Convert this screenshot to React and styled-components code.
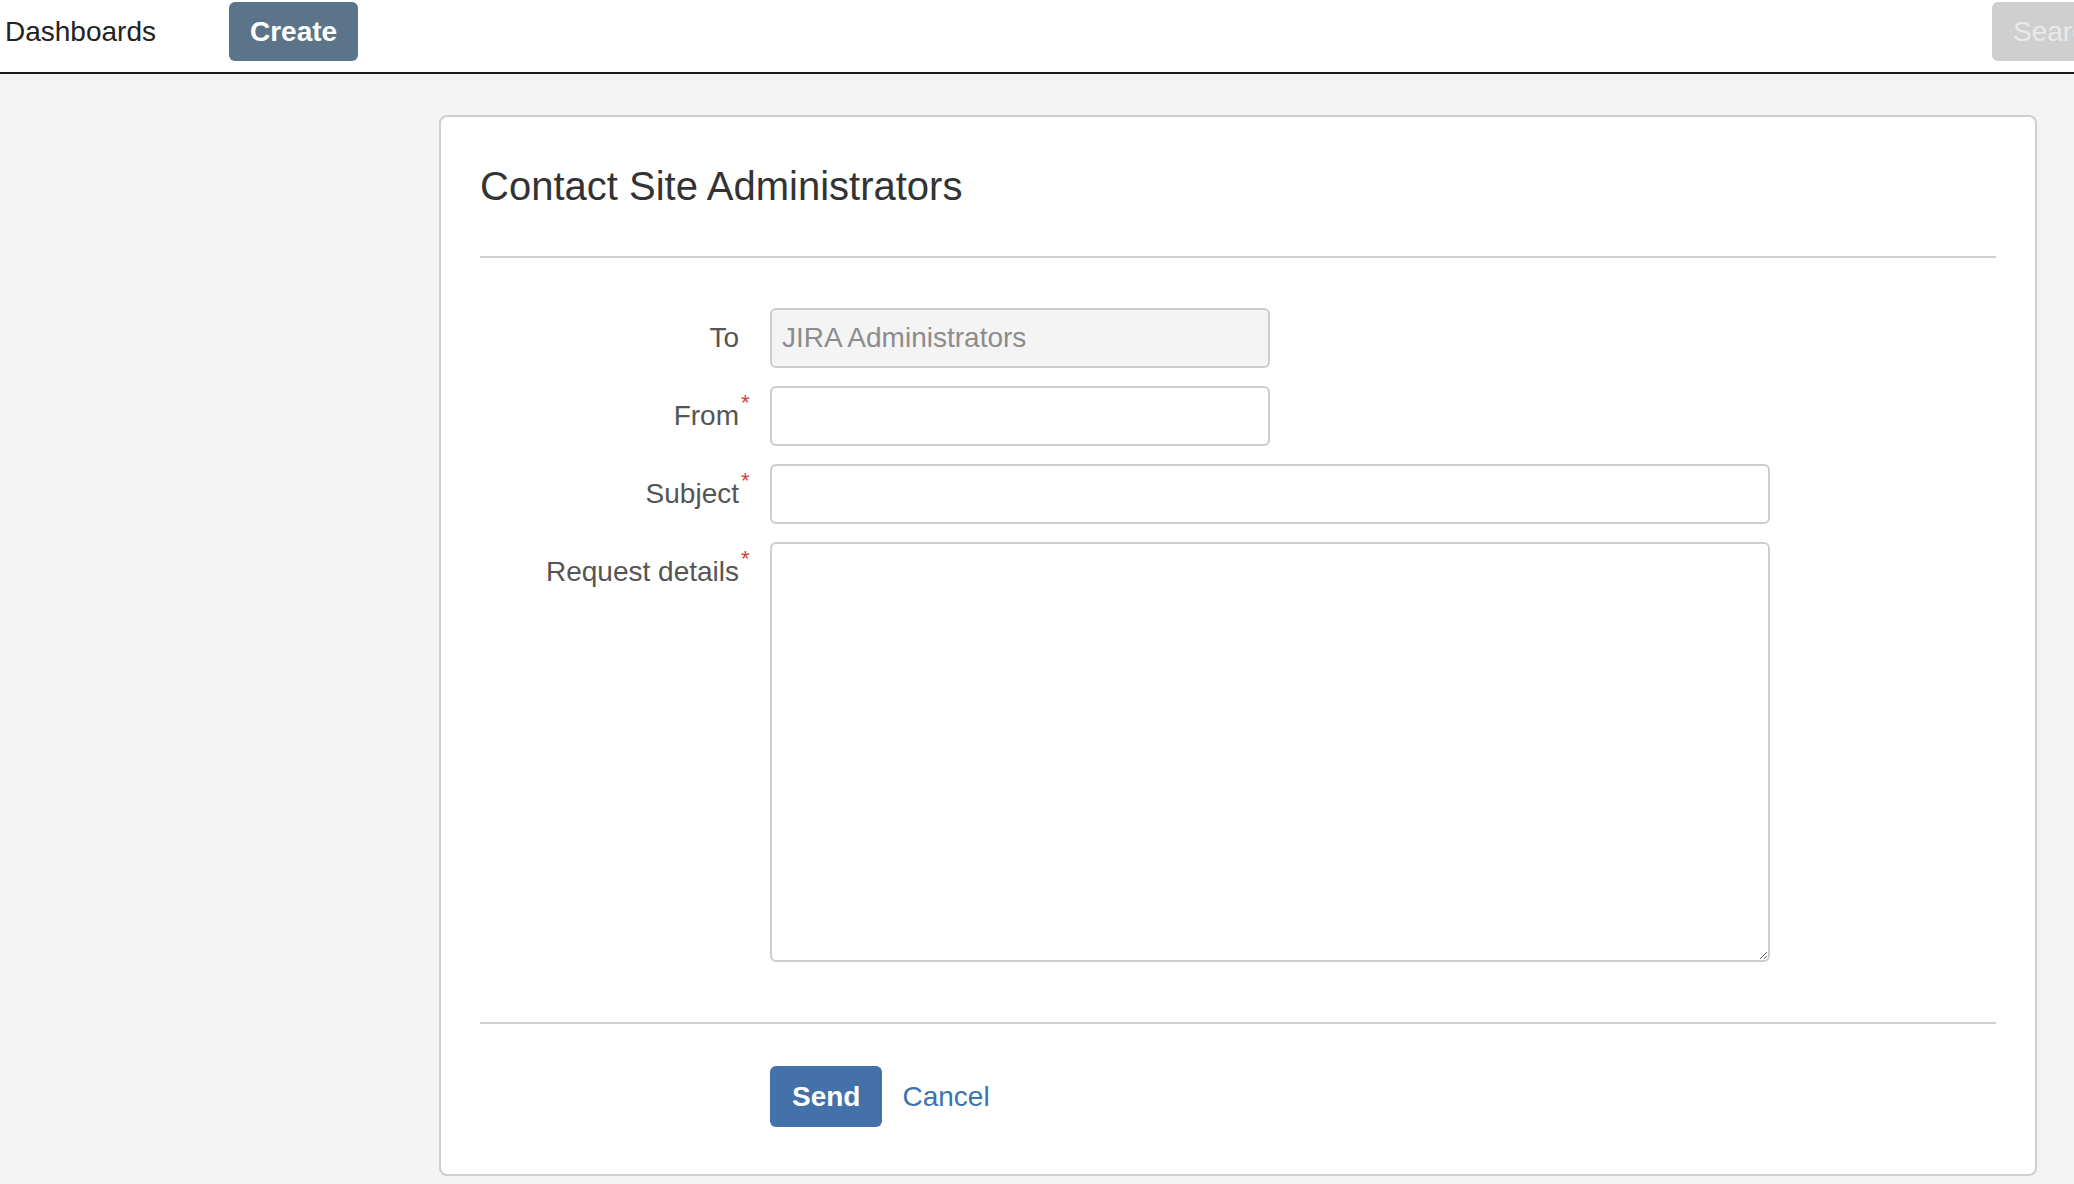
import React from "react"
import styled, { createGlobalStyle } from "styled-components"

const GlobalStyle = createGlobalStyle`
  html, body {
    margin: 0;
    padding: 0;
    background: #f4f4f4;
    font-family: "Liberation Sans", Arial, sans-serif;
    overflow: hidden;
  }
  * {
    box-sizing: border-box;
  }
`

const Header = styled.header`
  display: flex;
  align-items: flex-start;
  height: 74px;
  padding: 2px 0 0 5px;
  background: #fff;
  border-bottom: 2px solid #1c1c1c;
  overflow: hidden;
`

const NavItem = styled.a`
  line-height: 59px;
  font-size: 28px;
  color: #222;
  text-decoration: none;
`

const HeaderButton = styled.button`
  height: 59px;
  padding: 0 ${props => (props.$muted ? "0 0 21px" : "21px")};
  margin-left: ${props => (props.$muted ? "auto" : "73px")};
  margin-right: ${props => (props.$muted ? "-60px" : "0")};
  width: ${props => (props.$muted ? "142px" : "auto")};
  text-align: left;
  border: none;
  border-radius: 6px;
  background: ${props => (props.$muted ? "#cfcfcf" : "#5b7489")};
  color: ${props => (props.$muted ? "#e9e9e9" : "#fff")};
  font-family: inherit;
  font-size: 28px;
  font-weight: ${props => (props.$muted ? 400 : 700)};
`

const Page = styled.main`
  padding: 41px 37px 0 439px;
`

const Card = styled.section`
  background: #fff;
  border: 2px solid #cfcfcf;
  border-radius: 8px;
  padding: 45px 39px 47px 39px;
`

const Title = styled.h2`
  margin: 0 0 46px;
  font-size: 40px;
  line-height: 48px;
  font-weight: 400;
  color: #333;
`

const Divider = styled.hr`
  margin: 0;
  border: none;
  border-top: 2px solid #cfcfcf;
`

const Form = styled.form`
  display: grid;
  grid-template-columns: 259px 1fr;
  column-gap: 31px;
  row-gap: 18px;
  margin: 50px 0 60px;
`

const Label = styled.label`
  position: relative;
  justify-self: end;
  font-size: 28px;
  line-height: 60px;
  color: #555;
`

const Required = styled.span`
  position: absolute;
  left: calc(100% + 2px);
  top: 6px;
  font-size: 22px;
  line-height: 1;
  color: #d04437;
`

const Input = styled.input`
  width: ${props => props.$width}px;
  height: 60px;
  padding: 0 10px;
  border: 2px solid #cdcdcd;
  border-radius: 6px;
  background: ${props => (props.disabled ? "#f4f4f4" : "#fff")};
  color: #8c8c8c;
  font-family: inherit;
  font-size: 28px;
  -webkit-text-fill-color: #8c8c8c;
  opacity: 1;
`

const TextArea = styled.textarea`
  display: block;
  width: 1000px;
  height: 420px;
  padding: 10px;
  border: 2px solid #cdcdcd;
  border-radius: 6px;
  background: #fff;
  font-family: inherit;
  font-size: 28px;
  resize: both;
`

const Actions = styled.div`
  display: flex;
  align-items: center;
  gap: 20px;
  padding: 42px 0 0 290px;
`

const SubmitButton = styled.button`
  height: 61px;
  padding: 0 22px;
  border: none;
  border-radius: 6px;
  background: #4571aa;
  color: #fff;
  font-family: inherit;
  font-size: 28px;
  font-weight: 700;
`

const CancelLink = styled.a`
  font-size: 28px;
  color: #3b73af;
  text-decoration: none;
`

const Field = ({ label, required, children }) => (
  <>
    <Label>
      {label}
      {required && <Required>*</Required>}
    </Label>
    <div>{children}</div>
  </>
)

export default function App() {
  return (
    <>
      <GlobalStyle />
      <Header>
        <NavItem href="#">Dashboards</NavItem>
        <HeaderButton>Create</HeaderButton>
        <HeaderButton $muted>Search</HeaderButton>
      </Header>
      <Page>
        <Card>
          <Title>Contact Site Administrators</Title>
          <Divider />
          <Form>
            <Field label="To">
              <Input $width={500} disabled value="JIRA Administrators" readOnly />
            </Field>
            <Field label="From" required>
              <Input $width={500} />
            </Field>
            <Field label="Subject" required>
              <Input $width={1000} />
            </Field>
            <Field label="Request details" required>
              <TextArea />
            </Field>
          </Form>
          <Divider />
          <Actions>
            <SubmitButton type="button">Send</SubmitButton>
            <CancelLink href="#">Cancel</CancelLink>
          </Actions>
        </Card>
      </Page>
    </>
  )
}
